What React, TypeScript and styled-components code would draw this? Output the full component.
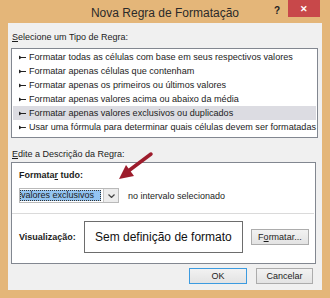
import React from "react";
import styled, { createGlobalStyle } from "styled-components";

const rules = [
  "Formatar todas as células com base em seus respectivos valores",
  "Formatar apenas células que contenham",
  "Formatar apenas os primeiros ou últimos valores",
  "Formatar apenas valores acima ou abaixo da média",
  "Formatar apenas valores exclusivos ou duplicados",
  "Usar uma fórmula para determinar quais células devem ser formatadas",
];
const selectedRule = 4;

const Bullet = () => (
  <svg width="7" height="5" viewBox="0 0 7 5">
    <path d="M0 0.5 L3 2.5 L0 4.5 Z" fill="#222" />
    <rect x="0" y="2" width="7" height="1" fill="#222" />
  </svg>
);

const RedArrow = () => (
  <ArrowLayer width="45" height="35" viewBox="0 0 45 35">
    <line x1="39" y1="4" x2="17" y2="20.5" stroke="#9d1c2c" strokeWidth="3.5" strokeLinecap="round" />
    <polygon points="7,29 22,26 14,15" fill="#9d1c2c" />
  </ArrowLayer>
);

function App() {
  return (
    <Window>
      <GlobalStyle />
      <TitleBar>
        <span />
        <Title>Nova Regra de Formatação</Title>
        <Controls>
          <Help>?</Help>
          <CloseBtn>✕</CloseBtn>
        </Controls>
      </TitleBar>
      <Client>
        <Label gap={5}>
          <u>S</u>elecione um Tipo de Regra:
        </Label>
        <RuleList>
          {rules.map((r, i) => (
            <RuleRow key={i} selected={i === selectedRule}>
              <Bullet />
              <span>{r}</span>
            </RuleRow>
          ))}
        </RuleList>
        <Label gap={2}>
          <u>E</u>dite a Descrição da Regra:
        </Label>
        <DescBox>
          <DescTop>
            <BoldLabel>
              Formata<u>r</u> tudo:
            </BoldLabel>
            <ComboRow>
              <Combo>
                <ComboValue>
                  <Selected>valores exclusivos</Selected>
                </ComboValue>
                <ComboArrow>
                  <svg width="7" height="4" viewBox="0 0 7 4">
                    <path d="M0.5 0.5 L3.5 3.5 L6.5 0.5" stroke="#444" strokeWidth="1.2" fill="none" />
                  </svg>
                </ComboArrow>
              </Combo>
              <Text>no intervalo selecionado</Text>
            </ComboRow>
          </DescTop>
          <PreviewRow>
            <BoldLabel>Visualização:</BoldLabel>
            <Preview>Sem definição de formato</Preview>
            <Button width={58}>
              F<u>o</u>rmatar...
            </Button>
          </PreviewRow>
        </DescBox>
        <Footer>
          <Button width={58} primary>
            OK
          </Button>
          <Button width={57}>Cancelar</Button>
        </Footer>
      </Client>
      <RedArrow />
    </Window>
  );
}

const GlobalStyle = createGlobalStyle`
  body {
    margin: 0;
    background: #e4b679;
    font-family: "Liberation Sans", Arial, sans-serif;
  }
  u { text-decoration: underline; text-underline-offset: 1px; }
`;

const Window = styled.div`
  position: relative;
  width: 330px;
  height: 298px;
  background: #e4b679;
  display: flex;
  flex-direction: column;
  box-sizing: border-box;
`;

const TitleBar = styled.div`
  height: 23px;
  display: grid;
  grid-template-columns: 1fr auto 1fr;
  align-items: start;
`;

const Title = styled.div`
  font-size: 12px;
  color: #2a2a2a;
  line-height: 14px;
  padding-top: 6px;
`;

const Controls = styled.div`
  display: flex;
  justify-content: flex-end;
  align-items: flex-start;
  padding-right: 10px;
`;

const Help = styled.div`
  font-size: 10px;
  font-weight: bold;
  color: #222;
  margin: 5px 8px 0 0;
`;

const CloseBtn = styled.div`
  width: 32px;
  height: 17px;
  background: #c8484a;
  color: #fff;
  font-size: 9px;
  font-weight: bold;
  display: flex;
  align-items: center;
  justify-content: center;
`;

const Client = styled.div`
  flex: 1;
  margin: 0 8px 8px;
  background: #f0f0f0;
  padding: 8px 4px 0 3px;
  display: flex;
  flex-direction: column;
  font-size: 9px;
  color: #1c1c1c;
  white-space: nowrap;
`;

const Label = styled.div<{ gap: number }>`
  line-height: 12px;
  padding-left: 1px;
  margin-bottom: ${(p) => p.gap}px;
`;

const RuleList = styled.div`
  height: 90px;
  box-sizing: border-box;
  border: 1px solid #828790;
  background: #fff;
  padding: 1px 1px 0;
  margin-bottom: 10px;
  font-size: 9.1px;
`;

const RuleRow = styled.div<{ selected?: boolean }>`
  height: 14px;
  display: flex;
  align-items: center;
  gap: 3px;
  padding-left: 6px;
  background: ${(p) => (p.selected ? "#dcdce2" : "transparent")};
`;

const DescBox = styled.div`
  height: 102px;
  box-sizing: border-box;
  width: 305px;
  border: 1px solid #828790;
  background: #fff;
  display: flex;
  flex-direction: column;
`;

const DescTop = styled.div`
  height: 51px;
  box-sizing: border-box;
  border-bottom: 1px solid #dadada;
  padding: 6px 0 0 7px;
  margin-right: 1px;
`;

const BoldLabel = styled.div`
  font-weight: bold;
  line-height: 12px;
`;

const ComboRow = styled.div`
  display: flex;
  align-items: center;
  gap: 9px;
  margin-top: 7px;
`;

const Combo = styled.div`
  width: 100px;
  height: 15px;
  box-sizing: border-box;
  border: 1px solid #b9b9b9;
  display: flex;
  background: #fff;
`;

const ComboValue = styled.div`
  flex: 1;
  padding: 1px 2px 1px 0;
  display: flex;
`;

const Selected = styled.div`
  flex: 1;
  background: #93c4f1;
  outline: 1px dotted #333;
  outline-offset: -1px;
  line-height: 11px;
  padding-left: 1px;
`;

const ComboArrow = styled.div`
  width: 14px;
  border-left: 1px solid #c6c6c6;
  background: #ececec;
  display: flex;
  align-items: center;
  justify-content: center;
`;

const Text = styled.span``;

const PreviewRow = styled.div`
  flex: 1;
  display: flex;
  align-items: center;
  padding: 0 0 3px 7px;
`;

const Preview = styled.div`
  width: 159px;
  height: 32px;
  box-sizing: border-box;
  border: 1px solid #6d6d6d;
  margin: 0 8px 0 8px;
  display: flex;
  align-items: center;
  justify-content: center;
  font-size: 12px;
  color: #111;
`;

const Button = styled.div<{ width: number; primary?: boolean }>`
  width: ${(p) => p.width}px;
  height: 16px;
  box-sizing: border-box;
  border: 1px solid ${(p) => (p.primary ? "#3c9be0" : "#acacac")};
  background: linear-gradient(#f2f2f2, #e3e3e3);
  display: flex;
  align-items: center;
  justify-content: center;
  font-size: 9px;
  color: #1c1c1c;
`;

const Footer = styled.div`
  display: flex;
  justify-content: flex-end;
  gap: 9px;
  margin-top: 4px;
  padding-right: 5px;
`;

const ArrowLayer = styled.svg`
  position: absolute;
  left: 112px;
  top: 150px;
`;

export default App;
